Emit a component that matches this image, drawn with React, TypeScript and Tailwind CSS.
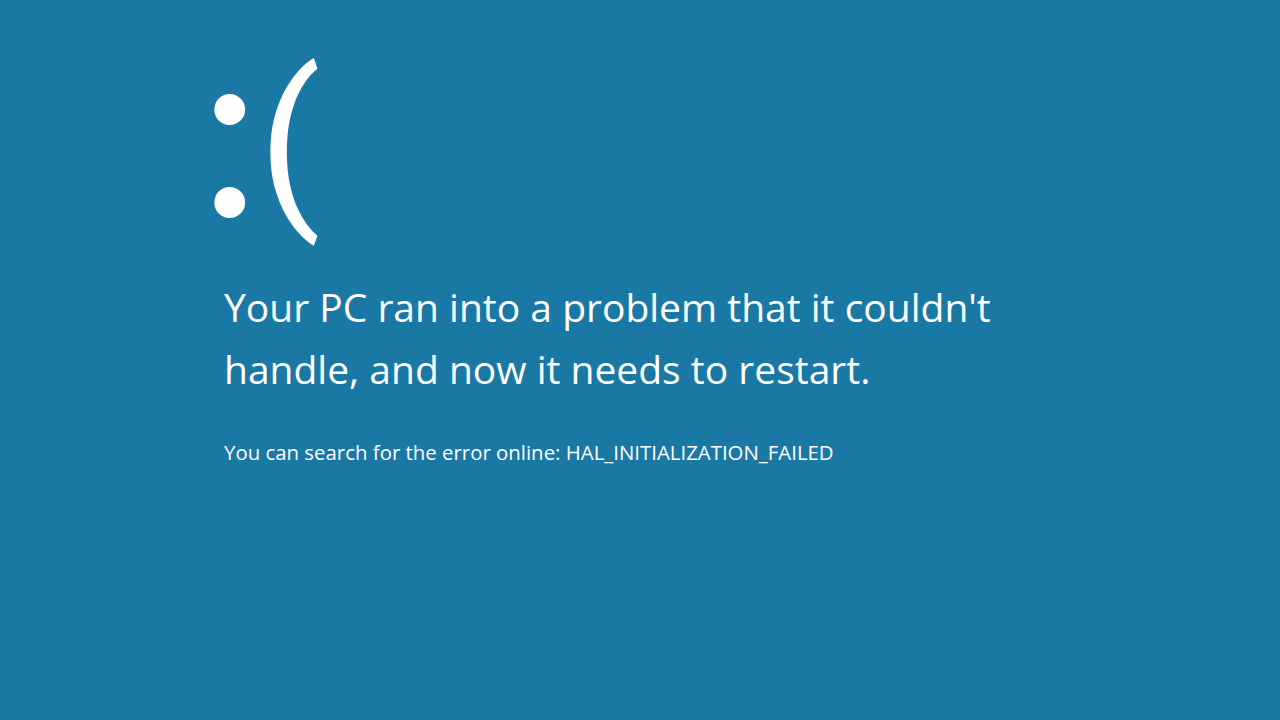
export default function App() {
  return (
    <div className="w-[1280px] h-[720px] bg-[#1a78a5] text-white overflow-hidden">
      <div className="h-[260px] pl-[199px] flex items-start select-none">
        <span className="font-[Lato] text-[246px] leading-[200px] mt-[21px]">:</span>
        <span className="font-[Roboto] text-[182px] leading-none mt-[51px] ml-[-2px]">(</span>
      </div>
      <div className="pl-[224px] pt-[16px] font-['Open_Sans','Noto_Sans',sans-serif]">
        <p className="text-[39px] leading-[62px] w-[820px]">
          Your PC ran into a problem that it couldn't handle, and now it needs to restart.
        </p>
        <p className="text-[20.4px] leading-[26px] mt-[39px]">
          You can search for the error online: HAL_INITIALIZATION_FAILED
        </p>
      </div>
    </div>
  );
}
